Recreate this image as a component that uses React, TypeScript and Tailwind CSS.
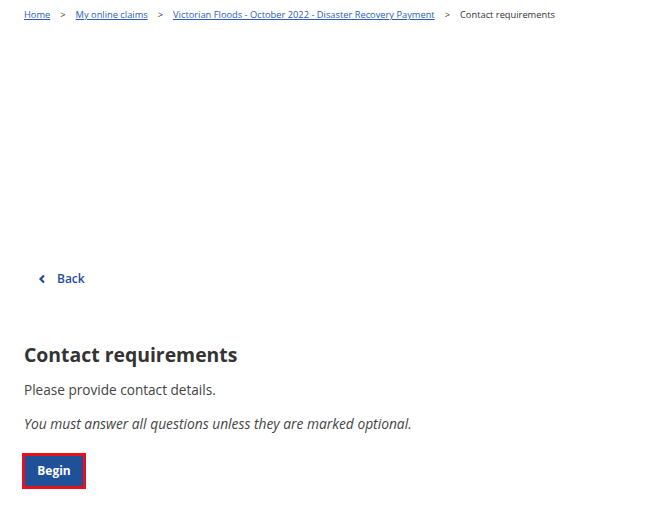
import React from "react";

export default function App() {
  return (
    <div className="w-[650px] h-[509px] bg-white text-[#333] font-['Open_Sans',sans-serif] flex flex-col px-6">
      <nav className="pt-[8px] flex items-center text-[9.3px] leading-[14px] text-[#333]">
        <a className="text-[#2a5db0] underline">Home</a>
        <span className="mx-[10px]">&gt;</span>
        <a className="text-[#2a5db0] underline">My online claims</a>
        <span className="mx-[10px]">&gt;</span>
        <a className="text-[#2a5db0] underline">Victorian Floods - October 2022 - Disaster Recovery Payment</a>
        <span className="mx-[10px]">&gt;</span>
        <span>Contact requirements</span>
      </nav>
      <div className="mt-[248px] flex items-center pl-[14px] text-[12px] font-semibold text-[#1f4e99]">
        <svg width="8" height="10" viewBox="0 0 8 10" className="mr-[11px]">
          <path d="M6 1.5 L2.5 5 L6 8.5" stroke="#1f4e99" strokeWidth="2.2" fill="none" />
        </svg>
        <span>Back</span>
      </div>
      <h1 className="mt-[53px] text-[19.4px] leading-[28px] font-bold text-[#333]">Contact requirements</h1>
      <p className="mt-[11px] text-[13.6px] leading-[20px] text-[#444]">Please provide contact details.</p>
      <p className="mt-[14px] text-[13.8px] leading-[20px] italic text-[#444]">You must answer all questions unless they are marked optional.</p>
      <div className="mt-[19px] -ml-[2px]">
        <button className="border-[3px] border-[#e8101c] bg-[#1f5199] text-white text-[12px] font-bold w-[64px] h-[36px]">Begin</button>
      </div>
    </div>
  );
}
